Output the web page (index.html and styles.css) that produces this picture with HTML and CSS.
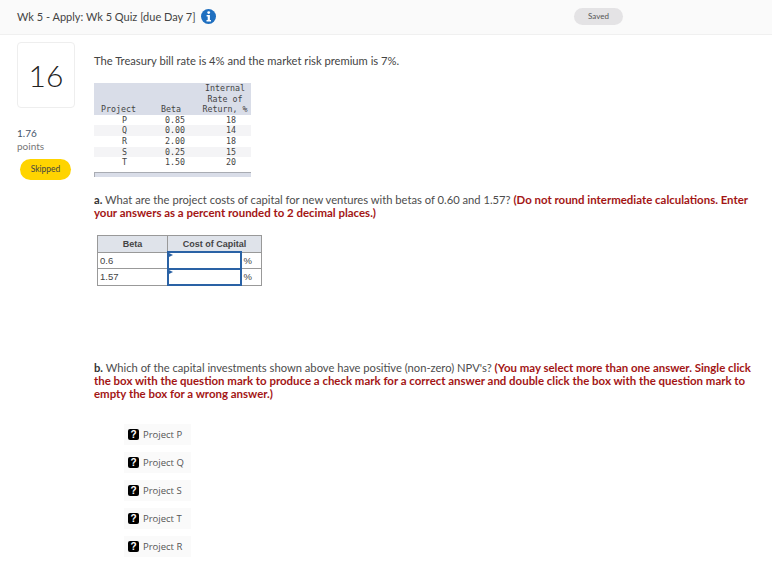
FILE: index.html
```html
<!DOCTYPE html>
<html lang="en">
<head>
    <meta charset="UTF-8">
    <title>Wk 5 - Apply: Wk 5 Quiz [due Day 7]</title>
    <link rel="stylesheet" href="styles.css">
</head>
<body>
    <!-- Top bar -->
    <header class="topbar">
        <div class="quiz-title">
            <span>Wk 5 - Apply: Wk 5 Quiz [due Day 7]</span>
            <svg class="info-icon" width="15" height="15" viewBox="0 0 15 15">
                <circle cx="7.5" cy="7.5" r="7.5" fill="#1f6fc0"/>
                <circle cx="7.7" cy="3.6" r="1.4" fill="#fff"/>
                <path d="M5.6 6h3.3v5h1.1v1.4H5.5V11h1.2V7.4H5.6z" fill="#fff"/>
            </svg>
        </div>
        <span class="saved">Saved</span>
    </header>

    <div class="question">
        <!-- Left column -->
        <aside class="sidebar">
            <div class="number-card">16</div>
            <div class="points">1.76</div>
            <div class="points-label">points</div>
            <div class="skipped">Skipped</div>
        </aside>

        <!-- Question body -->
        <main class="content">
            <p class="intro">The Treasury bill rate is 4% and the market risk premium is 7%.</p>

            <table class="data-table">
                <thead>
                    <tr>
                        <th class="col-project">Project</th>
                        <th class="col-beta">Beta</th>
                        <th class="col-irr">Internal<br>Rate of<br>Return, %</th>
                    </tr>
                </thead>
                <tbody>
                    <tr><td class="col-project">P</td><td class="col-beta">0.85</td><td class="col-irr">18</td></tr>
                    <tr class="shade"><td class="col-project">Q</td><td class="col-beta">0.00</td><td class="col-irr">14</td></tr>
                    <tr><td class="col-project">R</td><td class="col-beta">2.00</td><td class="col-irr">18</td></tr>
                    <tr class="shade"><td class="col-project">S</td><td class="col-beta">0.25</td><td class="col-irr">15</td></tr>
                    <tr><td class="col-project">T</td><td class="col-beta">1.50</td><td class="col-irr">20</td></tr>
                </tbody>
            </table>
            <div class="table-foot"></div>

            <p class="part part-a"><b class="part-label">a.</b> What are the project costs of capital for new ventures with betas of 0.60 and 1.57? <strong>(Do not round intermediate calculations. Enter your answers as a percent rounded to 2 decimal places.)</strong></p>

            <table class="answer-table">
                <colgroup>
                    <col class="ans-col-beta">
                    <col class="ans-col-input">
                    <col class="ans-col-unit">
                </colgroup>
                <thead>
                    <tr><th>Beta</th><th colspan="2">Cost of Capital</th></tr>
                </thead>
                <tbody>
                    <tr><td>0.6</td><td class="ans-input"></td><td>%</td></tr>
                    <tr><td>1.57</td><td class="ans-input"></td><td>%</td></tr>
                </tbody>
            </table>

            <p class="part part-b"><b class="part-label">b.</b> Which of the capital investments shown above have positive (non-zero) NPV's? <strong>(You may select more than one answer. Single click the box with the question mark to produce a check mark for a correct answer and double click the box with the question mark to empty the box for a wrong answer.)</strong></p>

            <ul class="choices">
                <li><span class="qbox">?</span>Project P</li>
                <li><span class="qbox">?</span>Project Q</li>
                <li><span class="qbox">?</span>Project S</li>
                <li><span class="qbox">?</span>Project T</li>
                <li><span class="qbox">?</span>Project R</li>
            </ul>
        </main>
    </div>
</body>
</html>
```

FILE: styles.css
```css
* {
    box-sizing: border-box;
    margin: 0;
    padding: 0;
}

body {
    font-family: 'Lato', sans-serif;
    background: #ffffff;
    color: #4a4a4a;
    width: 772px;
    height: 570px;
    overflow: hidden;
}

.topbar {
    height: 35px;
    background: #fafafa;
    border-bottom: 1px solid #f0f0f0;
    display: flex;
    align-items: center;
    justify-content: space-between;
    padding: 0 149px 2px 17px;
}

.quiz-title {
    display: flex;
    align-items: center;
    gap: 5px;
    font-size: 11px;
    color: #444;
}

.saved {
    width: 49px;
    height: 17px;
    border-radius: 9px;
    background: #e4e3e5;
    font-size: 8px;
    line-height: 17px;
    text-align: center;
    color: #555;
}

.question {
    display: flex;
}

.sidebar {
    width: 94px;
    padding: 7px 0 0 17px;
}

.number-card {
    width: 58px;
    height: 66px;
    border: 1px solid #eeeeee;
    border-radius: 4px;
    font-size: 30px;
    font-weight: 300;
    line-height: 64px;
    text-align: center;
    color: #222;
}

.points {
    margin-top: 19px;
    font-size: 10px;
    line-height: 13px;
    color: #44546a;
}

.points-label {
    font-size: 10px;
    line-height: 12px;
    color: #777;
}

.skipped {
    width: 51px;
    height: 21px;
    margin: 7px 0 0 3px;
    border-radius: 11px;
    background: #ffd400;
    font-size: 8.5px;
    line-height: 21px;
    text-align: center;
    color: #444;
}

.content {
    width: 664px;
}

.intro {
    margin-top: 19px;
    font-size: 11.2px;
    line-height: 14px;
    color: #444;
}

.data-table {
    margin-top: 15px;
    width: 157px;
    border-collapse: collapse;
    table-layout: fixed;
    font-family: 'DejaVu Sans Mono', monospace;
    font-size: 8.3px;
    color: #444;
}

.data-table th {
    background: #d9dde8;
    font-weight: normal;
    line-height: 10.5px;
    vertical-align: bottom;
    text-align: right;
}

.data-table td {
    height: 10.7px;
    line-height: 10.7px;
    text-align: right;
}

.data-table .shade td {
    background: #f4f4f6;
}

.col-project { width: 47px; }
.col-beta { width: 49px; }
.col-irr { width: 61px; }

th.col-project { padding-right: 5px; }
th.col-beta { padding-right: 9px; }
.data-table th.col-irr { padding-left: 9px; text-align: center; }
td.col-project { padding-right: 14px; }
td.col-beta { padding-right: 5px; }
td.col-irr { padding-right: 15px; }

.table-foot {
    width: 157px;
    height: 5px;
    margin-top: 4px;
    background: #d9dde8;
    border-top: 1px solid #a9acb3;
    border-left: 1px solid #a9acb3;
}

.part {
    font-size: 11.2px;
    line-height: 13px;
    color: #4d4d4d;
    width: 664px;
}

.part-label {
    color: #333;
}

.part strong {
    color: #a31515;
    font-size: 11.45px;
    font-weight: 700;
}

.part-a {
    margin-top: 16px;
}

.answer-table {
    margin: 16px 0 0 3px;
    width: 164px;
    border-collapse: collapse;
    table-layout: fixed;
    font-family: 'Liberation Sans', sans-serif;
    font-size: 9.5px;
    color: #444;
}

.answer-table th,
.answer-table td {
    border: 1px solid #999;
    height: 16.5px;
    padding: 0 2px;
}

.answer-table th {
    background: #dfe3ea;
    font-size: 9px;
    font-weight: bold;
    text-align: center;
}

.ans-col-beta { width: 70px; }
.ans-col-input { width: 73px; }
.ans-col-unit { width: 21px; }

.answer-table td.ans-input {
    border: 2px solid #2a62a5;
    position: relative;
}

.ans-input::before {
    content: "";
    position: absolute;
    top: 0;
    left: 0;
    border-left: 4px solid #2a62a5;
    border-top: 2px solid transparent;
    border-bottom: 2px solid transparent;
}

.part-b {
    margin-top: 75px;
}

.choices {
    list-style: none;
    margin: 24px 0 0 30px;
}

.choices li {
    display: flex;
    align-items: center;
    gap: 4px;
    width: 67px;
    height: 21px;
    margin-bottom: 7px;
    padding-left: 4px;
    background: #fafafa;
    font-family: 'Open Sans', sans-serif;
    font-size: 9.5px;
    color: #555;
}

.qbox {
    width: 11px;
    height: 11px;
    border-radius: 2px;
    background: #000;
    color: #fff;
    font-family: 'Liberation Sans', sans-serif;
    font-size: 10px;
    font-weight: bold;
    line-height: 11px;
    text-align: center;
}
```
